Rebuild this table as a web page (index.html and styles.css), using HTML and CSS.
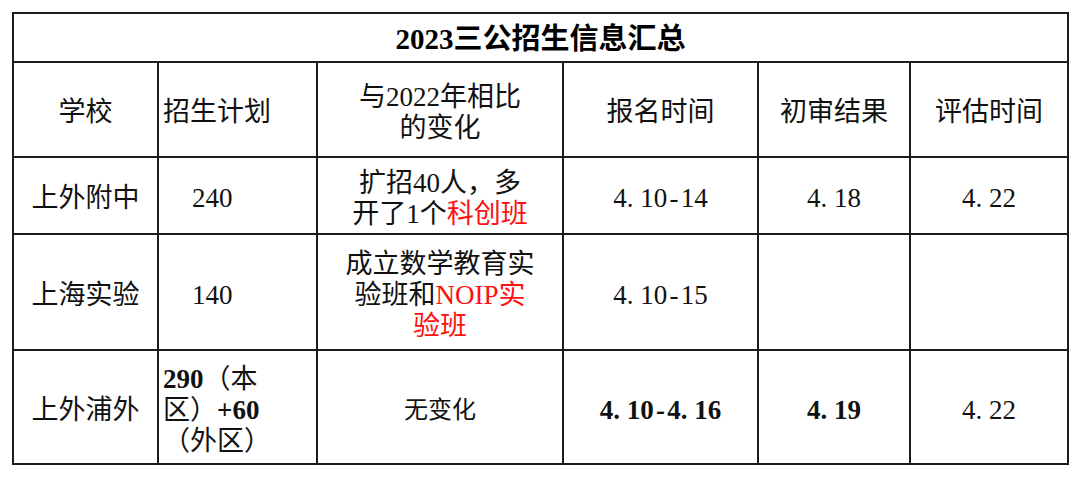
FILE: index.html
```html
<!DOCTYPE html>
<html lang="zh-CN">
<head>
<meta charset="utf-8">
<title>2023三公招生信息汇总</title>
<link rel="stylesheet" href="styles.css">
</head>
<body>
<div class="page">
  <table class="summary">
    <colgroup>
      <col class="c1"><col class="c2"><col class="c3"><col class="c4"><col class="c5"><col class="c6">
    </colgroup>
    <tr class="r-title">
      <th colspan="6" class="title">2023三公招生信息汇总</th>
    </tr>
    <tr class="r-head">
      <th>学校</th>
      <th class="left">招生计划</th>
      <th>与2022年相比<br>的变化</th>
      <th>报名时间</th>
      <th>初审结果</th>
      <th>评估时间</th>
    </tr>
    <tr class="r-1">
      <td>上外附中</td>
      <td class="left indent">240</td>
      <td>扩招40人，多<br>开了1个<span class="red">科创班</span></td>
      <td>4<span class="dot">.</span>10<span class="dash">-</span>14</td>
      <td>4<span class="dot">.</span>18</td>
      <td>4<span class="dot">.</span>22</td>
    </tr>
    <tr class="r-2">
      <td>上海实验</td>
      <td class="left indent">140</td>
      <td>成立数学教育实<br>验班和<span class="red">NOIP实<br>验班</span></td>
      <td>4<span class="dot">.</span>10<span class="dash">-</span>15</td>
      <td></td>
      <td></td>
    </tr>
    <tr class="r-3">
      <td>上外浦外</td>
      <td class="left"><span class="b">290</span>（本<br>区）<span class="b">+60</span><br>（外区）</td>
      <td class="small">无变化</td>
      <td class="bold">4<span class="dot">.</span>10<span class="dash">-</span>4<span class="dot">.</span>16</td>
      <td class="bold">4<span class="dot">.</span>19</td>
      <td>4<span class="dot">.</span>22</td>
    </tr>
  </table>
</div>
</body>
</html>
```

FILE: styles.css
```css
html, body {
  margin: 0;
  padding: 0;
  background: #ffffff;
}

.page {
  padding: 12px 0 0 12px;
}

.summary {
  border-collapse: collapse;
  table-layout: fixed;
  width: 1055px;
  font-family: "Liberation Serif", "Noto Sans CJK SC", serif;
  font-size: 27px;
  line-height: 31px;
  color: #111111;
}

.c1 { width: 145px; }
.c2 { width: 159px; }
.c3 { width: 246px; }
.c4 { width: 195px; }
.c5 { width: 152px; }
.c6 { width: 158px; }

.summary th,
.summary td {
  border: 2px solid #1c1c1c;
  padding: 6px 4px 0 4px;
  text-align: center;
  vertical-align: middle;
  font-weight: 400;
}

.r-title { height: 49px; }
.r-head { height: 95px; }
.r-1 { height: 77px; }
.r-2 { height: 116px; }
.r-3 { height: 114px; }

.summary th.title {
  font-size: 29px;
  font-weight: 700;
  color: #000000;
  padding-top: 3px;
}

.summary .left {
  text-align: left;
}

.summary .indent {
  padding-left: 33px;
}

.red {
  color: #ff1010;
}

.dot {
  display: inline-block;
  width: 0.5em;
  text-align: left;
}

.dash {
  display: inline-block;
  width: 0.5em;
  text-align: center;
}

.b {
  font-weight: 600;
}

.summary .bold {
  font-weight: 700;
}

.summary .small {
  font-size: 24px;
}
```
